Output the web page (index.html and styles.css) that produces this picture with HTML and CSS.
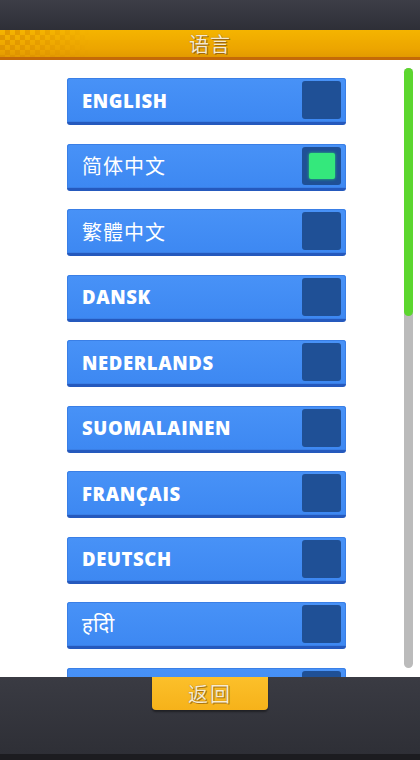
FILE: index.html
```html
<!DOCTYPE html>
<html lang="zh">

<head>
    <meta charset="UTF-8">
    <meta name="viewport" content="width=device-width, initial-scale=1.0">
    <title>语言</title>
    <link rel="stylesheet" href="styles.css">
</head>

<body>
    <div class="screen">
        <div class="topbar"></div>

        <div class="titlebar">
            <div class="checker"></div>
            <h1 class="title">语言</h1>
        </div>

        <div class="content">
            <div class="list">
                <div class="lang"><span class="name">ENGLISH</span><span class="box"></span></div>
                <div class="lang"><span class="name cjk">简体中文</span><span class="box on"><i></i></span></div>
                <div class="lang"><span class="name cjk">繁體中文</span><span class="box"></span></div>
                <div class="lang"><span class="name">DANSK</span><span class="box"></span></div>
                <div class="lang"><span class="name">NEDERLANDS</span><span class="box"></span></div>
                <div class="lang"><span class="name">SUOMALAINEN</span><span class="box"></span></div>
                <div class="lang"><span class="name">FRANÇAIS</span><span class="box"></span></div>
                <div class="lang"><span class="name">DEUTSCH</span><span class="box"></span></div>
                <div class="lang"><span class="name deva">हदिी</span><span class="box"></span></div>
                <div class="lang"><span class="name"></span><span class="box"></span></div>
            </div>
            <div class="scrollbar"><div class="thumb"></div></div>
        </div>

        <div class="footer">
            <button class="back">返回</button>
        </div>
    </div>
</body>

</html>
```

FILE: styles.css
```css
html, body {
    margin: 0;
    padding: 0;
    background: #2f3038;
}

.screen {
    width: 420px;
    height: 760px;
    display: flex;
    flex-direction: column;
    overflow: hidden;
    font-family: "Open Sans", "Noto Sans", "Noto Sans CJK SC", sans-serif;
}

.topbar {
    height: 30px;
    background: linear-gradient(#3d3e47, #2e2f37);
}

.titlebar {
    position: relative;
    height: 27px;
    background: linear-gradient(#f5b400, #eca500 70%, #e39a00);
    border-bottom: 3px solid #c46a08;
    display: flex;
    align-items: center;
    justify-content: center;
}

.checker {
    position: absolute;
    left: 0;
    top: 0;
    width: 90px;
    height: 27px;
    background: repeating-conic-gradient(#dc9000 0 25%, transparent 0 50%) 0 0 / 10px 10px;
    -webkit-mask-image: linear-gradient(to right, rgba(0, 0, 0, 0.8), transparent);
    mask-image: linear-gradient(to right, rgba(0, 0, 0, 0.8), transparent);
}

.title {
    margin: 0;
    font-family: "Noto Sans CJK SC", sans-serif;
    font-weight: 400;
    font-size: 20px;
    line-height: 27px;
    color: #f6ead0;
    letter-spacing: 1px;
    text-shadow: 0 0 1px #8a5a10, 1px 1px 0 #a06a10;
    position: relative;
}

.content {
    position: relative;
    height: 617px;
    background: #ffffff;
    overflow: hidden;
}

.list {
    padding-top: 18px;
    display: flex;
    flex-direction: column;
    gap: 18.5px;
    margin-left: 67px;
    width: 279px;
}

.lang {
    height: 44px;
    flex-shrink: 0;
    border-radius: 3px;
    background: linear-gradient(#4892f7, #3d88f2);
    border-bottom: 3px solid #2559bd;
    box-shadow: 0 0 0 1px #3a7fe6 inset;
    display: flex;
    align-items: center;
    justify-content: space-between;
    padding: 0 5px 0 15px;
}

.name {
    color: #ffffff;
    font-weight: 800;
    font-size: 18.5px;
    letter-spacing: 0.6px;
}

.name.cjk {
    font-family: "Noto Sans CJK SC", sans-serif;
    font-weight: 400;
    font-size: 20px;
    letter-spacing: 1px;
}

.name.deva {
    font-family: "Noto Sans", "Noto Sans Devanagari", sans-serif;
    font-weight: 400;
    font-size: 20px;
}

.box {
    width: 39px;
    height: 38px;
    border-radius: 3px;
    background: #1f5096;
    display: flex;
    align-items: center;
    justify-content: center;
}

.box.on i {
    width: 26px;
    height: 26px;
    border-radius: 2px;
    background: #34e87c;
    box-shadow: 0 0 3px #2ad070;
}

.scrollbar {
    position: absolute;
    right: 7px;
    top: 8px;
    width: 9px;
    height: 600px;
    border-radius: 5px;
    background: #bbbbbb;
}

.thumb {
    height: 248px;
    border-radius: 5px;
    background: #5cd62e;
}

.footer {
    flex: 1;
    background: linear-gradient(#3a3b43, #2e2f36 93%, #1c1c20 93%);
    display: flex;
    justify-content: center;
    align-items: flex-start;
}

.back {
    width: 116px;
    height: 33px;
    border: none;
    border-radius: 0 0 4px 4px;
    background: linear-gradient(#fcc02a, #f6b21a);
    box-shadow: 0 2px 2px rgba(0, 0, 0, 0.4);
    font-family: "Noto Sans CJK SC", sans-serif;
    font-size: 20px;
    color: #f8ecd0;
    letter-spacing: 2px;
    text-shadow: 0 0 1px #8a5a10, 1px 1px 0 #b07a10;
    padding: 0;
    line-height: 33px;
}
```
